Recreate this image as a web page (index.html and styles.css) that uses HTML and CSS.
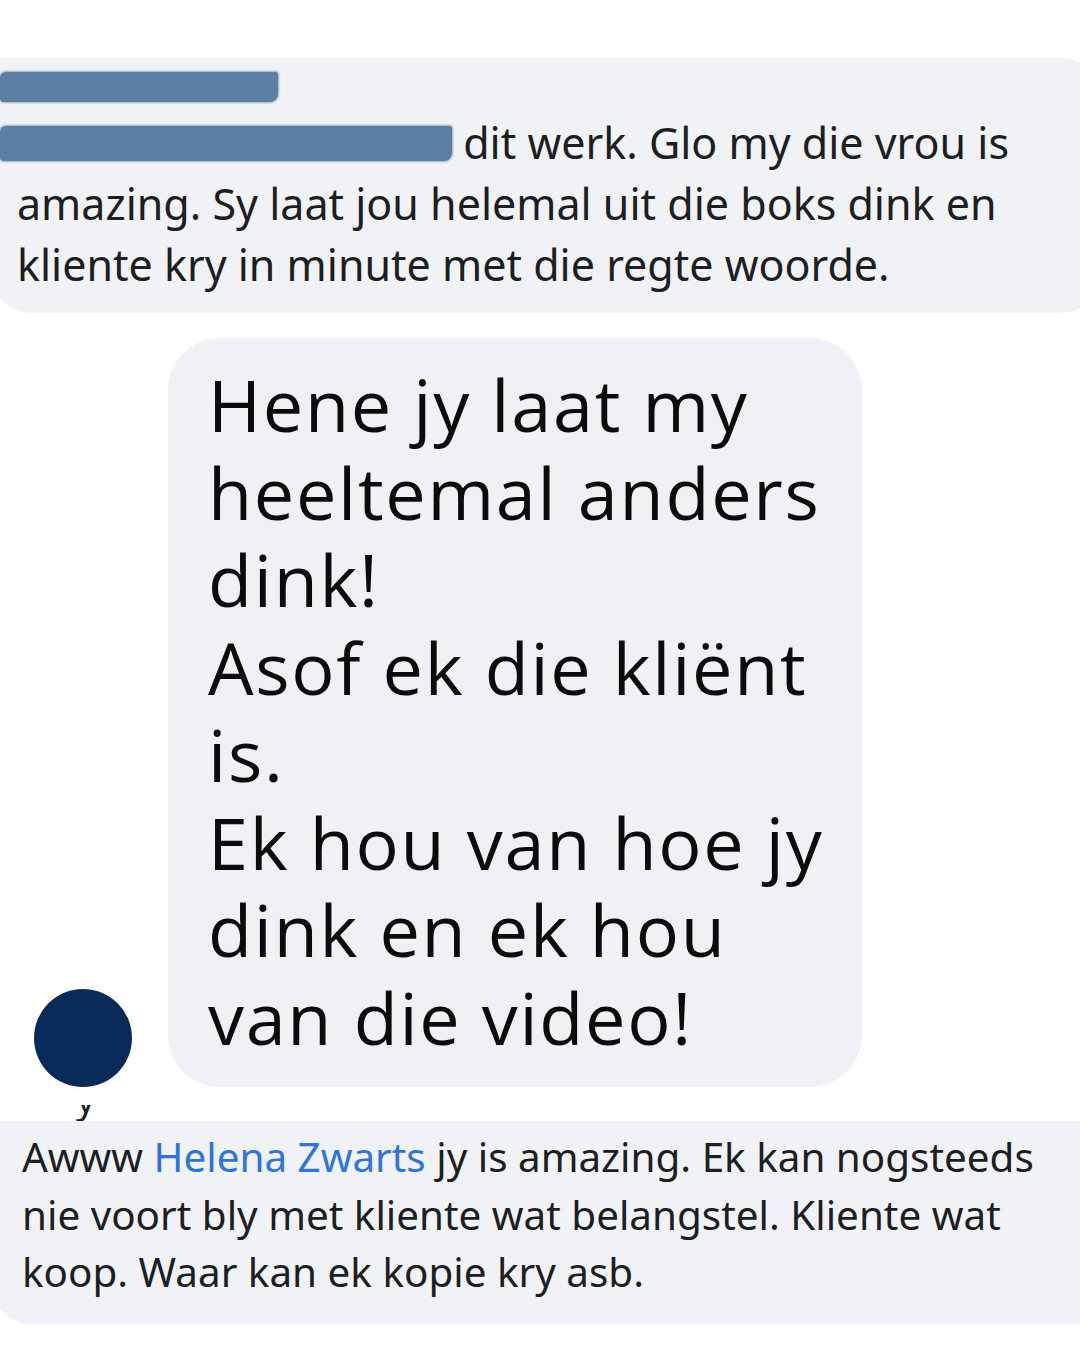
FILE: index.html
```html
<!DOCTYPE html>
<html>
<head>
<meta charset="utf-8">
<title>Kommentare</title>
<link rel="stylesheet" href="styles.css">
</head>
<body>
<div class="thread">

<div class="comment comment-top">
<div class="author"><span class="redact redact-name"></span></div>
<p class="body"><span class="redact redact-tag"></span> dit werk. Glo my die vrou is<br>
amazing. Sy laat jou helemal uit die boks dink en<br>
kliente kry in minute met die regte woorde.</p>
</div>

<div class="reply-row">
<div class="avatar"></div>
<div class="bubble">
Hene jy laat my<br>heeltemal anders<br>dink!<br>
Asof ek die kliënt<br>is.<br>
Ek hou van hoe jy<br>dink en ek hou<br>van die video!
</div>
</div>

<div class="comment comment-bottom">
<div class="cut"><span>y</span></div>
<p class="body">Awww <a class="name" href="#">Helena Zwarts</a> jy is amazing. Ek kan nogsteeds<br>
nie voort bly met kliente wat belangstel. Kliente wat<br>
koop. Waar kan ek kopie kry asb.</p>
</div>

</div>
</body>
</html>
```

FILE: styles.css
```css
/* Comment thread screenshot */

body
{ margin: 0;
  background: #ffffff;
  font-family: "Noto Sans", "Open Sans", sans-serif;
  color: #1c1e21;
}

.thread
{ padding-top: 58px;
  overflow: hidden;
}

/* Facebook style comments */

.comment
{ background-color: #f0f2f5;
  margin-left: -6px;
  width: 1084px;
  white-space: nowrap;
}

.comment-top
{ padding: 6px 0 18px 23px;
  border-radius: 0 40px 40px 36px;
}

.author
{ height: 48px;
}

.body
{ margin: 0;
  font-size: 43px;
  line-height: 61px;
}

.redact
{ display: inline-block;
  background-color: #5b7ea2;
  vertical-align: -2px;
  border-radius: 6px 3px 8px 4px;
  box-shadow: 0 0 2px 1px rgba(91, 126, 162, 0.6);
}

.redact-name
{ width: 278px;
  height: 30px;
  margin-top: 8px;
  margin-left: -17px;
}

.redact-tag
{ width: 452px;
  height: 35px;
  margin-left: -17px;
}

.comment-bottom
{ position: relative;
  margin-top: 34px;
  padding: 7px 0 23px 28px;
  border-radius: 0 0 30px 36px;
}

.comment-bottom .body
{ font-size: 40.4px;
  line-height: 57.5px;
}

a.name
{ color: #2f74dc;
  text-decoration: none;
}

/* descender of a line cut off above the bottom comment */
.cut
{ position: absolute;
  left: 82px;
  top: -16px;
  height: 16px;
  overflow: hidden;
  font-size: 38px;
  line-height: 1;
}

.cut span
{ display: block;
  margin-top: -26px;
}

/* Reply with avatar */

.reply-row
{ display: flex;
  align-items: flex-end;
  gap: 36px;
  margin-top: 25px;
  padding-left: 34px;
}

.avatar
{ width: 98px;
  height: 98px;
  border-radius: 50%;
  background-color: #072a58;
  flex: none;
}

.bubble
{ width: 654px;
  padding: 23px 0 26px 40px;
  background-color: #f0f1f4;
  border-radius: 52px;
  font-family: "Open Sans", Roboto, sans-serif;
  font-size: 72px;
  letter-spacing: 1.7px;
  line-height: 87.5px;
  color: #0b0b0b;
  white-space: nowrap;
}
```
